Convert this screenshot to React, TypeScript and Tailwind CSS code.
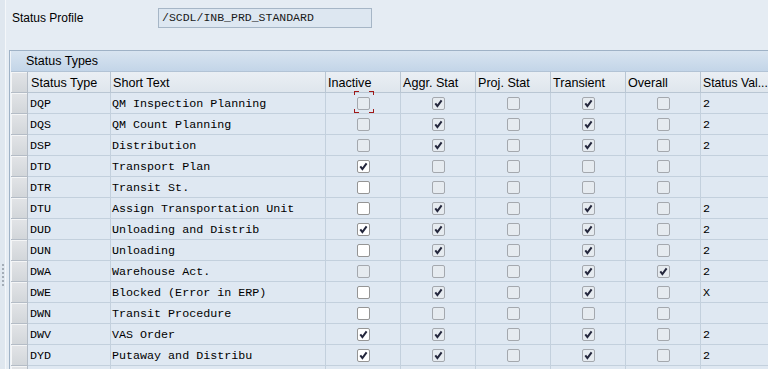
import { Fragment } from "react";

type Row = {
    code: string;
    text: string;
    flags: number[]; // Inactive, Aggr, Proj, Transient, Overall
    val: string;
    editable: boolean;
};

const rows: Row[] = [
    { code: "DQP", text: "QM Inspection Planning", flags: [0, 1, 0, 1, 0], val: "2", editable: false },
    { code: "DQS", text: "QM Count Planning", flags: [0, 1, 0, 1, 0], val: "2", editable: false },
    { code: "DSP", text: "Distribution", flags: [0, 1, 0, 1, 0], val: "2", editable: false },
    { code: "DTD", text: "Transport Plan", flags: [1, 0, 0, 0, 0], val: "", editable: true },
    { code: "DTR", text: "Transit St.", flags: [0, 0, 0, 0, 0], val: "", editable: true },
    { code: "DTU", text: "Assign Transportation Unit", flags: [0, 1, 0, 1, 0], val: "2", editable: true },
    { code: "DUD", text: "Unloading and Distrib", flags: [1, 1, 0, 1, 0], val: "2", editable: true },
    { code: "DUN", text: "Unloading", flags: [0, 1, 0, 1, 0], val: "2", editable: true },
    { code: "DWA", text: "Warehouse Act.", flags: [0, 0, 0, 1, 1], val: "2", editable: false },
    { code: "DWE", text: "Blocked (Error in ERP)", flags: [0, 1, 0, 1, 0], val: "X", editable: true },
    { code: "DWN", text: "Transit Procedure", flags: [0, 0, 0, 0, 0], val: "", editable: true },
    { code: "DWV", text: "VAS Order", flags: [1, 1, 0, 1, 0], val: "2", editable: true },
    { code: "DYD", text: "Putaway and Distribu", flags: [1, 1, 0, 1, 0], val: "2", editable: true },
];

const headers = ["Status Type", "Short Text", "Inactive", "Aggr. Stat", "Proj. Stat", "Transient", "Overall", "Status Val..."];

function Box({ on, white }: { on: boolean; white: boolean }) {
    return (
        <span
            className={
                white
                    ? "w-[13px] h-[13px] rounded-[2px] border border-[#959595] bg-white flex items-center justify-center"
                    : "w-[13px] h-[13px] rounded-[2px] border border-[#a4a8ae] bg-[#e6ebf0] flex items-center justify-center"
            }
        >
            {on && (
                <svg width="11" height="11" viewBox="0 0 11 11">
                    <path d="M2.3 5.4 L4.4 8.1 L8.6 2.4" fill="none" stroke="#23263c" strokeWidth="2" />
                </svg>
            )}
        </span>
    );
}

// red focus corners around the current cell
function Focus() {
    return (
        <span className="absolute left-[28px] top-[-2px] w-[20px] h-[22px] pointer-events-none">
            <span className="absolute left-0 top-0 w-[5px] h-[4px] border-l border-t border-[#a01818]" />
            <span className="absolute right-0 top-0 w-[5px] h-[4px] border-r border-t border-[#a01818]" />
            <span className="absolute left-0 bottom-0 w-[5px] h-[4px] border-l border-b border-[#a01818]" />
            <span className="absolute right-0 bottom-0 w-[5px] h-[4px] border-r border-b border-[#a01818]" />
        </span>
    );
}

const sel = "h-[21px] border-r border-b border-[#b4bcc6] bg-gradient-to-b from-[#e2e4e7] to-[#d2d6da] shadow-[inset_1px_1px_0_#f4f5f6]";
const cell = "h-[21px] border-r border-b border-[#c3d0dd] bg-[#dfe8f2]";
const mono = "font-['Liberation_Mono',monospace] text-[11.7px] text-black pt-[3px]";

export default function App() {
    return (
        <div className="w-[768px] h-[369px] overflow-hidden bg-[#e5ecf3] flex font-['Liberation_Sans',Arial,sans-serif] text-[12px] text-black">
            {/* left strip with drag handle */}
            <div className="w-[6px] shrink-0 bg-[#dfe7ef] border-r border-[#f4f7fa] flex flex-col items-center pt-[264px] gap-[2px]">
                {[...Array(6)].map((_, i) => (
                    <span key={i} className="w-[2px] h-[2px] bg-[#a3acb6]" />
                ))}
            </div>

            <div className="flex-1 flex flex-col min-w-0">
                {/* Header field */}
                <div className="h-[50px] shrink-0 pl-[6px] pt-[8px]">
                    <div className="flex items-center h-[20px]">
                        <span className="w-[146px]">Status Profile</span>
                        <div className="w-[214px] h-[20px] border border-[#a6b6c6] bg-[#dde7f1] flex items-center pl-[3px] font-['Liberation_Mono',monospace] text-[11.5px] text-[#1a1a1a]">
                            /SCDL/INB_PRD_STANDARD
                        </div>
                    </div>
                </div>

                {/* Table panel */}
                <div className="ml-[3px] border-l border-t border-[#9fb2c6] pl-[1px] bg-[#eef3f8] flex flex-col">
                    <div className="h-[21px] bg-gradient-to-b from-[#d8e4f0] to-[#c3d5e8] flex items-center pl-[15px] pt-[1px] border-b border-[#b2c3d5] text-[12.5px]">
                        Status Types
                    </div>
                    <div className="grid grid-cols-[17px_83px_215px_75px_75px_75px_75px_75px_75px]">
                        <div className={sel} />
                        {headers.map((h, i) => (
                            <div
                                key={h}
                                className={
                                    i === 0
                                        ? "h-[21px] border-r border-b border-[#b9c6d3] bg-gradient-to-b from-[#eaeff4] to-[#dfe6ed] flex items-center pl-[3px] pt-[2px] whitespace-nowrap text-[12.6px]"
                                        : i === 7
                                          ? "h-[21px] border-r border-b border-[#b9c6d3] bg-gradient-to-b from-[#eaeff4] to-[#dfe6ed] flex items-center pl-[2px] pt-[2px] whitespace-nowrap text-[12.2px]"
                                          : "h-[21px] border-r border-b border-[#b9c6d3] bg-gradient-to-b from-[#eaeff4] to-[#dfe6ed] flex items-center pl-[2px] pt-[2px] whitespace-nowrap text-[12.6px]"
                                }
                            >
                                {h}
                            </div>
                        ))}

                        {rows.map((r, ri) => (
                            <Fragment key={r.code}>
                                <div className={sel} />
                                <div className={`${cell} ${mono} flex items-center pl-[2px]`}>{r.code}</div>
                                <div className={`${cell} ${mono} flex items-center pl-[1px] whitespace-nowrap`}>{r.text}</div>
                                {r.flags.map((f, fi) => (
                                    <div key={fi} className={`${cell} relative flex items-center justify-center`}>
                                        <Box on={f === 1} white={fi === 0 && r.editable} />
                                        {ri === 0 && fi === 0 && <Focus />}
                                    </div>
                                ))}
                                <div className={`${cell} ${mono} flex items-center pl-[2px]`}>{r.val}</div>
                            </Fragment>
                        ))}

                        <div className={sel} />
                        {headers.map((h) => (
                            <div key={h} className={cell} />
                        ))}
                    </div>
                </div>
            </div>
        </div>
    );
}
